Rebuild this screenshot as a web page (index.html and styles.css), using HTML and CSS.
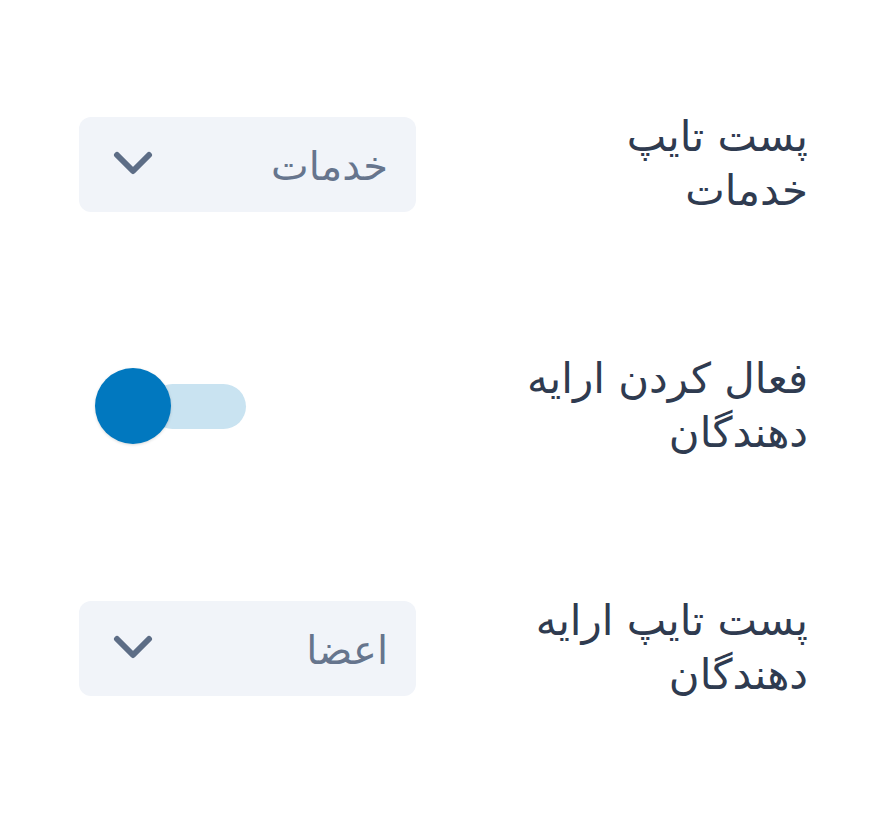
FILE: index.html
```html
<!DOCTYPE html>
<html lang="fa" dir="rtl">
<head>
<meta charset="utf-8">
<title>تنظیمات</title>
<link rel="stylesheet" href="styles.css">
</head>
<body>
<div class="settings">
  <div class="row">
    <div class="label"><div class="line">پست تایپ</div><div class="line">خدمات</div></div>
    <div class="select">
      <span class="select-text">خدمات</span>
      <svg class="chevron" viewBox="0 0 40 28" width="40" height="28"><path d="M4 5 L20 21 L36 5" fill="none" stroke="#5d6d86" stroke-width="6" stroke-linecap="round" stroke-linejoin="round"/></svg>
    </div>
  </div>
  <div class="row">
    <div class="label"><div class="line">فعال کردن ارایه</div><div class="line">دهندگان</div></div>
    <div class="toggle-wrap">
      <div class="toggle">
        <div class="track"></div>
        <div class="knob"></div>
      </div>
    </div>
  </div>
  <div class="row">
    <div class="label"><div class="line">پست تایپ ارایه</div><div class="line">دهندگان</div></div>
    <div class="select">
      <span class="select-text">اعضا</span>
      <svg class="chevron" viewBox="0 0 40 28" width="40" height="28"><path d="M4 5 L20 21 L36 5" fill="none" stroke="#5d6d86" stroke-width="6" stroke-linecap="round" stroke-linejoin="round"/></svg>
    </div>
  </div>
</div>
</body>
</html>
```
FILE: styles.css
```css
html, body {
  margin: 0;
  padding: 0;
  background: #ffffff;
}
body {
  font-family: "DejaVu Sans", "Noto Sans Arabic", sans-serif;
  color: #2f3b50;
}
.settings {
  display: flex;
  flex-direction: column;
  gap: 134px;
  padding: 110px 84px 0 79px;
}
.row {
  display: flex;
  flex-direction: row;
  justify-content: space-between;
  align-items: center;
  height: 108px;
}
.label {
  font-size: 42px;
  color: #2f3b50;
  text-align: right;
  display: flex;
  flex-direction: column;
}
.line {
  line-height: 54px;
  height: 54px;
}
.select {
  width: 337px;
  height: 95px;
  box-sizing: border-box;
  background: #f1f4f9;
  border-radius: 12px;
  display: flex;
  align-items: center;
  justify-content: space-between;
  padding: 4px 28px 0 34px;
}
.select-text {
  font-size: 40px;
  color: #66758d;
  line-height: 1;
}
.chevron {
  display: block;
  margin-top: -4px;
}
.toggle-wrap {
  width: 337px;
  display: flex;
  direction: ltr;
  justify-content: flex-start;
  padding-left: 16px;
  box-sizing: border-box;
}
.toggle {
  position: relative;
  width: 151px;
  height: 76px;
}
.track {
  position: absolute;
  left: 55px;
  top: 16px;
  width: 96px;
  height: 45px;
  border-radius: 23px;
  background: #c9e3f1;
}
.knob {
  position: absolute;
  left: 0;
  top: 0;
  width: 76px;
  height: 76px;
  border-radius: 50%;
  background: #0178bf;
  box-shadow: 0 1px 3px rgba(0, 0, 0, 0.15);
}
```
